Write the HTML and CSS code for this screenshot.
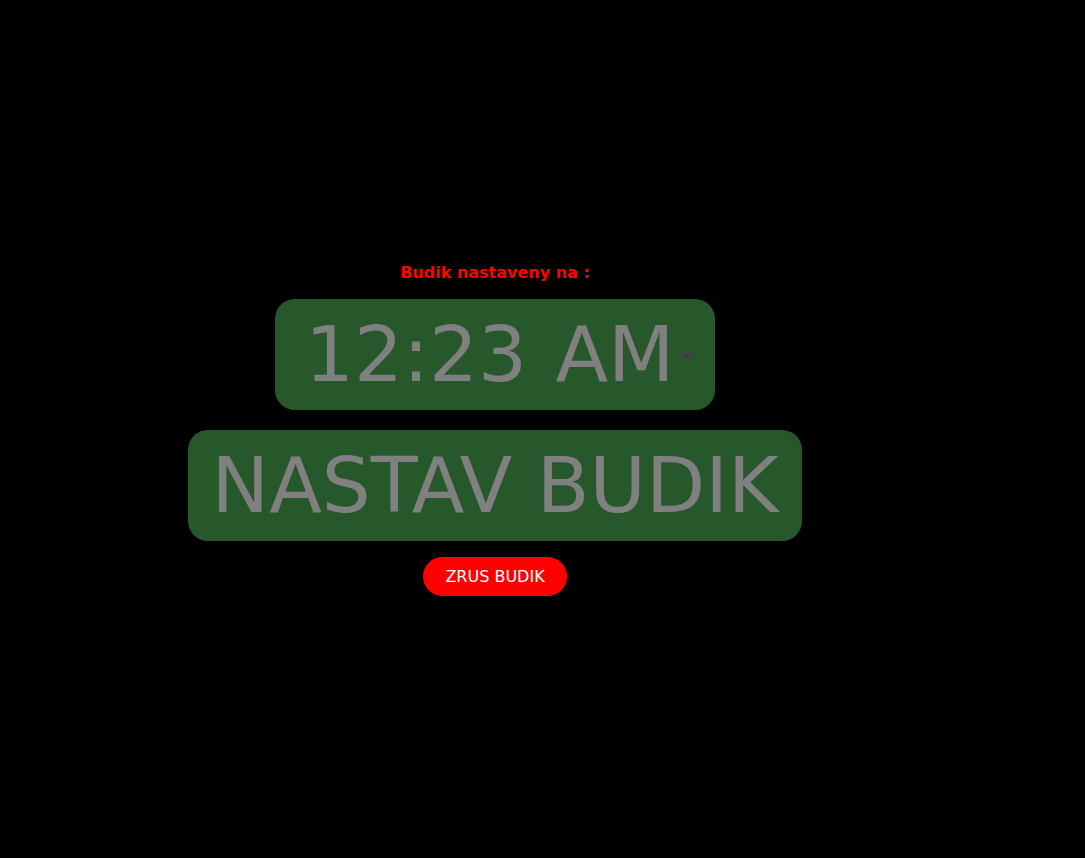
FILE: index.html
```html
<!DOCTYPE html>
<html>
<head>
<meta charset="utf-8">
<link rel="stylesheet" href="styles.css">
</head>
<body>
<main class="page">
  <section class="alarm">
    <p class="label">Budik nastaveny na :</p>
    <div class="time-box">
      <span class="time-text">12:23 AM</span>
      <svg class="clock-icon" width="12" height="12" viewBox="0 0 12 12" aria-hidden="true">
        <circle cx="6" cy="6" r="5" fill="#474747"/>
        <circle cx="6" cy="6" r="3" fill="#3f3f3f"/>
      </svg>
    </div>
    <button class="set-btn">NASTAV BUDIK</button>
    <button class="cancel-btn">ZRUS BUDIK</button>
  </section>
</main>
</body>
</html>
```
FILE: styles.css
```css
html, body {
  margin: 0;
  padding: 0;
  background: #000;
}
.page {
  width: 990px;
  height: 860px;
  display: flex;
  align-items: center;
  justify-content: center;
  font-family: "DejaVu Sans", Verdana, sans-serif;
}
.alarm {
  display: flex;
  flex-direction: column;
  align-items: center;
}
.label {
  margin: 0 0 17px;
  color: #ff0000;
  font-weight: bold;
  font-size: 16px;
  line-height: 18px;
}
.time-box {
  box-sizing: border-box;
  width: 440px;
  height: 111px;
  background: #27582b;
  border-radius: 20px;
  display: flex;
  align-items: center;
  padding-left: 30px;
  gap: 6px;
}
.time-text {
  color: #808080;
  font-size: 77px;
  line-height: 1;
  word-spacing: 4px;
}
.clock-icon {
  margin-top: 2px;
}
.set-btn {
  box-sizing: border-box;
  margin-top: 20px;
  width: 614px;
  height: 111px;
  background: #27582b;
  border: none;
  border-radius: 20px;
  color: #808080;
  font-family: inherit;
  font-size: 77px;
  padding: 0;
}
.cancel-btn {
  box-sizing: border-box;
  margin-top: 16px;
  width: 144px;
  height: 39px;
  background: #ff0000;
  border: none;
  border-radius: 20px;
  color: #fff;
  font-family: inherit;
  font-size: 16px;
  padding: 0;
}
```
